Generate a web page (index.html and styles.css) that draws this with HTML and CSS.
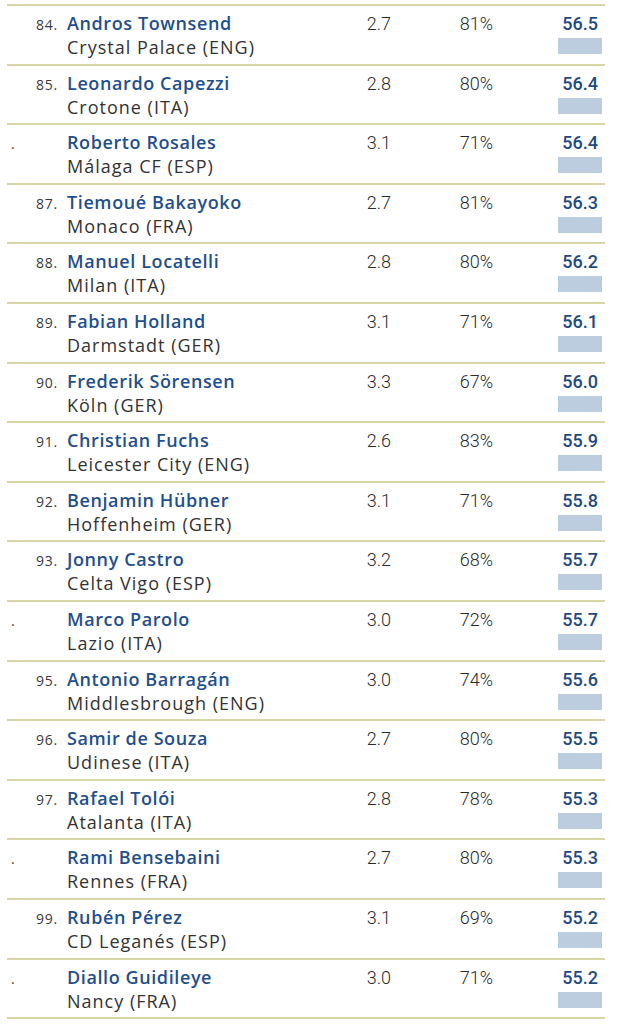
FILE: index.html
```html
<!DOCTYPE html>
<html>
<head>
<meta charset="utf-8">
<link rel="stylesheet" href="styles.css">
</head>
<body>
<div class="table">
  <div class="row"><div class="rank">84.</div><div class="player"><div class="name">Andros Townsend</div><div class="club">Crystal Palace (ENG)</div></div><div class="stat">2.7</div><div class="stat">81%</div><div class="score"><div class="value">56.5</div><div class="bar"></div></div></div>
  <div class="row"><div class="rank">85.</div><div class="player"><div class="name">Leonardo Capezzi</div><div class="club">Crotone (ITA)</div></div><div class="stat">2.8</div><div class="stat">80%</div><div class="score"><div class="value">56.4</div><div class="bar"></div></div></div>
  <div class="row"><div class="rank tie">.</div><div class="player"><div class="name">Roberto Rosales</div><div class="club">Málaga CF (ESP)</div></div><div class="stat">3.1</div><div class="stat">71%</div><div class="score"><div class="value">56.4</div><div class="bar"></div></div></div>
  <div class="row"><div class="rank">87.</div><div class="player"><div class="name">Tiemoué Bakayoko</div><div class="club">Monaco (FRA)</div></div><div class="stat">2.7</div><div class="stat">81%</div><div class="score"><div class="value">56.3</div><div class="bar"></div></div></div>
  <div class="row"><div class="rank">88.</div><div class="player"><div class="name">Manuel Locatelli</div><div class="club">Milan (ITA)</div></div><div class="stat">2.8</div><div class="stat">80%</div><div class="score"><div class="value">56.2</div><div class="bar"></div></div></div>
  <div class="row"><div class="rank">89.</div><div class="player"><div class="name">Fabian Holland</div><div class="club">Darmstadt (GER)</div></div><div class="stat">3.1</div><div class="stat">71%</div><div class="score"><div class="value">56.1</div><div class="bar"></div></div></div>
  <div class="row"><div class="rank">90.</div><div class="player"><div class="name">Frederik Sörensen</div><div class="club">Köln (GER)</div></div><div class="stat">3.3</div><div class="stat">67%</div><div class="score"><div class="value">56.0</div><div class="bar"></div></div></div>
  <div class="row"><div class="rank">91.</div><div class="player"><div class="name">Christian Fuchs</div><div class="club">Leicester City (ENG)</div></div><div class="stat">2.6</div><div class="stat">83%</div><div class="score"><div class="value">55.9</div><div class="bar"></div></div></div>
  <div class="row"><div class="rank">92.</div><div class="player"><div class="name">Benjamin Hübner</div><div class="club">Hoffenheim (GER)</div></div><div class="stat">3.1</div><div class="stat">71%</div><div class="score"><div class="value">55.8</div><div class="bar"></div></div></div>
  <div class="row"><div class="rank">93.</div><div class="player"><div class="name">Jonny Castro</div><div class="club">Celta Vigo (ESP)</div></div><div class="stat">3.2</div><div class="stat">68%</div><div class="score"><div class="value">55.7</div><div class="bar"></div></div></div>
  <div class="row"><div class="rank tie">.</div><div class="player"><div class="name">Marco Parolo</div><div class="club">Lazio (ITA)</div></div><div class="stat">3.0</div><div class="stat">72%</div><div class="score"><div class="value">55.7</div><div class="bar"></div></div></div>
  <div class="row"><div class="rank">95.</div><div class="player"><div class="name">Antonio Barragán</div><div class="club">Middlesbrough (ENG)</div></div><div class="stat">3.0</div><div class="stat">74%</div><div class="score"><div class="value">55.6</div><div class="bar"></div></div></div>
  <div class="row"><div class="rank">96.</div><div class="player"><div class="name">Samir de Souza</div><div class="club">Udinese (ITA)</div></div><div class="stat">2.7</div><div class="stat">80%</div><div class="score"><div class="value">55.5</div><div class="bar"></div></div></div>
  <div class="row"><div class="rank">97.</div><div class="player"><div class="name">Rafael Tolói</div><div class="club">Atalanta (ITA)</div></div><div class="stat">2.8</div><div class="stat">78%</div><div class="score"><div class="value">55.3</div><div class="bar"></div></div></div>
  <div class="row"><div class="rank tie">.</div><div class="player"><div class="name">Rami Bensebaini</div><div class="club">Rennes (FRA)</div></div><div class="stat">2.7</div><div class="stat">80%</div><div class="score"><div class="value">55.3</div><div class="bar"></div></div></div>
  <div class="row"><div class="rank">99.</div><div class="player"><div class="name">Rubén Pérez</div><div class="club">CD Leganés (ESP)</div></div><div class="stat">3.1</div><div class="stat">69%</div><div class="score"><div class="value">55.2</div><div class="bar"></div></div></div>
  <div class="row"><div class="rank tie">.</div><div class="player"><div class="name">Diallo Guidileye</div><div class="club">Nancy (FRA)</div></div><div class="stat">3.0</div><div class="stat">71%</div><div class="score"><div class="value">55.2</div><div class="bar"></div></div></div>
</div>
</body>
</html>
```

FILE: styles.css
```css
html, body {
  margin: 0;
  padding: 0;
  background: #ffffff;
}

.table {
  margin: 4px 15px 0 7px;
  border-top: 2px solid #d8d5a6;
  font-family: "Open Sans", "Liberation Sans", sans-serif;
  color: #333333;
}

.row {
  display: grid;
  grid-template-columns: 51px 272px 61px 102px 109px;
  align-items: baseline;
  height: 57.6px;
  box-sizing: content-box;
  border-bottom: 2px solid #d8d5a6;
}

.rank {
  font-size: 14px;
  letter-spacing: 0.8px;
  text-align: right;
  color: #3a3a3a;
}

.rank.tie {
  text-align: left;
  padding-left: 4px;
}

.player {
  padding-left: 9px;
  padding-top: 5px;
}

.name {
  font-size: 18px;
  line-height: 24px;
  font-weight: 600;
  letter-spacing: 0.6px;
  color: #1f4f8d;
}

.club {
  font-size: 18px;
  line-height: 24px;
  letter-spacing: 1px;
  color: #333333;
}

.stat {
  font-family: Roboto, "Liberation Sans", sans-serif;
  font-weight: 300;
  font-size: 18px;
  text-align: right;
  color: #2a2a2a;
}

.score {
  display: flex;
  flex-direction: column;
  align-items: flex-end;
}

.value {
  font-family: Roboto, "Liberation Sans", sans-serif;
  font-weight: 500;
  font-size: 18px;
  color: #1e4b7f;
  padding-right: 4px;
}

.bar {
  width: 44px;
  height: 16px;
  margin-top: 4px;
  background: #bdcde0;
}
```
